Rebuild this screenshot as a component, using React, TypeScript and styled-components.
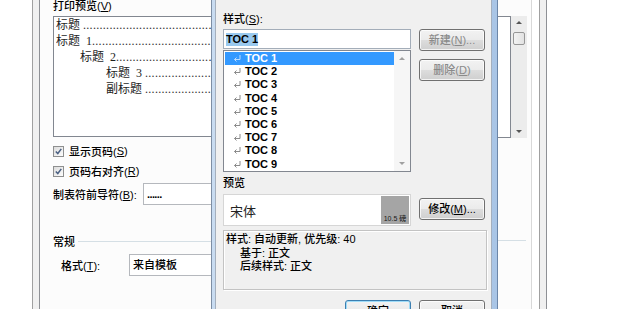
import React from 'react'
import styled, { createGlobalStyle } from 'styled-components'

const UI = `"Liberation Sans", "Noto Sans CJK SC", sans-serif`
const SERIF = `"Liberation Serif", "Noto Sans CJK SC", serif`

const GlobalStyle = createGlobalStyle`
  html, body {
    margin: 0;
    padding: 0;
    background: #fff;
    overflow: hidden;
  }
  body {
    font-family: ${UI};
    font-size: 11px;
    font-weight: 500;
    color: #000;
  }
  u {
    text-decoration-thickness: 1px;
    text-underline-offset: 1px;
  }
`

const Screen = styled.div`
  position: relative;
  width: 620px;
  height: 309px;
  overflow: hidden;
  display: flex;
  background: #fff;
`

const Outside = styled.div<{ $w?: number }>`
  flex: ${p => (p.$w ? `0 0 ${p.$w}px` : '1 1 auto')};
`

const Bevel = styled.div`
  flex: 0 0 8px;
  box-sizing: border-box;
  border-left: 1px solid #a0a0a0;
  border-right: 1px solid #8e9095;
  background: #f0f0f0;
`

const TabPage = styled.div`
  flex: 0 0 492px;
  box-sizing: border-box;
  border-right: 1px solid #d9d9d9;
  background: #fcfcfc;
  display: grid;
  grid-template-columns: 171px 287px 1fr;
`

/* ---------- background page, left part ---------- */

const LeftPane = styled.div`
  padding-left: 13px;
  display: flex;
  flex-direction: column;
  overflow: hidden;
`

const PaneLabel = styled.div`
  height: 12px;
  line-height: 12px;
  margin-bottom: 4px;
  white-space: nowrap;
`

const TocPreview = styled.div`
  flex: none;
  box-sizing: border-box;
  width: 200px;
  height: 121px;
  border: 1px solid #828790;
  background: #fff;
  padding: 0 0 0 2px;
  font-family: ${SERIF};
  font-size: 12px;
  font-weight: 400;
  color: #1e1e1e;
`

const TocLine = styled.div<{ $indent: number }>`
  display: flex;
  height: 16px;
  line-height: 16px;
  padding-left: ${p => p.$indent}px;
  white-space: pre;
  overflow: hidden;
`

const Leader = styled.span`
  flex: 1 1 auto;
  overflow: hidden;
  letter-spacing: 0.3px;
  color: #333;
`

const CheckRow = styled.div<{ $top?: number }>`
  display: flex;
  align-items: center;
  height: 20px;
  margin-top: ${p => p.$top ?? 0}px;
  white-space: nowrap;
`

const CheckBox = styled.span`
  box-sizing: border-box;
  width: 11px;
  height: 11px;
  margin-right: 5px;
  border: 1px solid #8e8f8f;
  background: linear-gradient(135deg, #dcdcdc, #fdfdfd);
  display: flex;
  align-items: center;
  justify-content: center;
`

const FieldRow = styled.div<{ $top?: number; $indent?: number }>`
  display: flex;
  align-items: center;
  margin-top: ${p => p.$top ?? 0}px;
  padding-left: ${p => p.$indent ?? 0}px;
  white-space: nowrap;
`

const RowLabel = styled.span<{ $w: number }>`
  flex: 0 0 ${p => p.$w}px;
`

const Field = styled.div<{ $bold?: boolean }>`
  flex: none;
  box-sizing: border-box;
  width: 120px;
  height: 22px;
  line-height: 20px;
  padding-left: 3px;
  border: 1px solid #b5b8bd;
  background: #fff;
  font-weight: ${p => (p.$bold ? 'bold' : 500)};
  letter-spacing: ${p => (p.$bold ? '-0.6px' : '0')};
`

const GroupHead = styled.div`
  display: flex;
  align-items: center;
  height: 16px;
  margin-top: 28px;
  white-space: nowrap;
`

const Rule = styled.span`
  flex: 0 0 140px;
  height: 1px;
  margin-left: 3px;
  background: #d5dfe5;
`

/* ---------- background page, right part ---------- */

const RightPane = styled.div`
  padding-top: 16px;
`

const RightList = styled.div`
  display: flex;
  width: 29px;
  height: 122px;
`

const ListPane = styled.div`
  flex: 1 1 auto;
  border-top: 1px solid #828790;
  border-right: 1px solid #828790;
  border-bottom: 1px solid #828790;
  background: #fff;
`

const ScrollTrack = styled.div`
  flex: 0 0 16px;
  display: flex;
  flex-direction: column;
  align-items: center;
  box-sizing: border-box;
  padding: 5px 0;
  background: #ececec;
`

const Thumb = styled.div`
  box-sizing: border-box;
  width: 12px;
  height: 13px;
  margin-top: 8px;
  border: 1px solid #979797;
  border-radius: 2px;
  background: linear-gradient(90deg, #f3f3f3, #e2e2e2);
`

const Tri = styled.span<{ $down?: boolean; $color?: string; $push?: boolean }>`
  width: 0;
  height: 0;
  flex: none;
  margin-top: ${p => (p.$push ? 'auto' : '0')};
  border-left: 3px solid transparent;
  border-right: 3px solid transparent;
  ${p =>
    p.$down
      ? `border-top: 3px solid ${p.$color ?? '#555'};`
      : `border-bottom: 3px solid ${p.$color ?? '#555'};`}
`

const SideRule = styled.div`
  width: 28px;
  height: 1px;
  margin-top: 102px;
  background: #d5dfe5;
`

/* ---------- foreground dialog ---------- */

const Dialog = styled.div`
  position: absolute;
  left: 211px;
  top: 0;
  width: 287px;
  height: 330px;
  box-sizing: border-box;
  display: flex;
  padding: 0 5px 0 3px;
  border-left: 1px solid #7d8ea4;
  border-right: 1px solid #6c86a8;
  background: linear-gradient(90deg, #c9dcf1, #b7cfea 50%, #a9c5e6);
`

const DialogBody = styled.div`
  flex: 1 1 auto;
  box-sizing: border-box;
  padding: 12px 6px 0 7px;
  border-left: 1px solid #a4afbd;
  border-right: 1px solid #a4afbd;
  background: #f0f0f0;
  display: flex;
  flex-direction: column;
`

const FieldLabel = styled.div<{ $top?: number }>`
  height: 14px;
  line-height: 14px;
  margin-top: ${p => p.$top ?? 0}px;
  white-space: nowrap;
`

const StyleRow = styled.div`
  display: flex;
  gap: 8px;
  margin-top: 3px;
`

const StyleCol = styled.div`
  flex: 0 0 188px;
  display: flex;
  flex-direction: column;
  gap: 1px;
`

const NameInput = styled.div`
  box-sizing: border-box;
  height: 20px;
  padding: 0 2px;
  border: 1px solid #a3adb9;
  background: #fff;
  display: flex;
  align-items: center;
`

const Selected = styled.span`
  height: 13px;
  line-height: 13px;
  background: #99c9ef;
  font-weight: bold;
`

const StyleList = styled.div`
  box-sizing: border-box;
  height: 122px;
  border: 1px solid #828790;
  background: #fff;
  display: flex;
`

const Items = styled.div`
  flex: 1 1 auto;
  padding: 1px 0 0 1px;
`

const StyleItem = styled.div<{ $active?: boolean }>`
  height: 13.2px;
  line-height: 13px;
  display: flex;
  align-items: center;
  padding-left: 8px;
  font-weight: bold;
  white-space: nowrap;
  overflow: hidden;
  background: ${p => (p.$active ? '#3399ff' : 'transparent')};
  color: ${p => (p.$active ? '#fff' : '#000')};
`

const ListScroll = styled.div`
  flex: 0 0 16px;
  box-sizing: border-box;
  padding: 6px 0;
  display: flex;
  flex-direction: column;
  align-items: center;
  justify-content: space-between;
  background: #f6f6f6;
`

const ButtonCol = styled.div`
  display: flex;
  flex-direction: column;
  gap: 8px;
`

const Button = styled.button<{ $top?: number; $default?: boolean }>`
  flex: none;
  box-sizing: border-box;
  width: 66px;
  height: 22px;
  margin: ${p => p.$top ?? 0}px 0 0 0;
  padding: 0;
  font-family: ${UI};
  font-size: 11px;
  font-weight: 500;
  line-height: 20px;
  color: #000;
  border: 1px solid ${p => (p.$default ? '#3c7fb1' : '#707070')};
  border-radius: 3px;
  background: linear-gradient(#f2f2f2 0%, #ebebeb 50%, #dddddd 50%, #cfcfcf 100%);
  box-shadow: inset 0 0 0 1px ${p => (p.$default ? '#9fdcf8' : 'rgba(255, 255, 255, 0.75)')};
  white-space: nowrap;

  &:disabled {
    color: #8a8a8a;
  }
`

const PreviewRow = styled.div`
  display: flex;
  align-items: flex-start;
  gap: 8px;
  margin-top: 4px;
`

const Sample = styled.div`
  flex: 0 0 188px;
  box-sizing: border-box;
  height: 32px;
  padding: 1px;
  border: 1px solid #d6d6d6;
  background: #fff;
  display: flex;
`

const SampleText = styled.div`
  flex: 1 1 auto;
  padding-left: 5px;
  display: flex;
  align-items: center;
  font-size: 13px;
  font-weight: 400;
  color: #222;
`

const SizeTag = styled.div`
  flex: 0 0 28px;
  background: #a5a5a5;
  display: flex;
  align-items: flex-end;
  justify-content: center;
  padding-bottom: 1px;
  font-size: 7px;
  line-height: 9px;
  color: #1a1a1a;
  white-space: nowrap;
`

const Description = styled.div`
  box-sizing: border-box;
  height: 60px;
  margin: 4px -2px 0 0;
  padding: 2px 2px 0 2px;
  border: 1px solid #c3c3c3;
  box-shadow: inset 1px 1px 0 #fff, 1px 1px 0 #fff;
`

const DescLine = styled.div<{ $indent?: boolean }>`
  height: 13.5px;
  line-height: 13.5px;
  padding-left: ${p => (p.$indent ? 14 : 0)}px;
  white-space: nowrap;
`

const Footer = styled.div`
  display: flex;
  justify-content: flex-end;
  gap: 8px;
  margin-top: 10px;
`

const Check = () => (
  <svg width="7" height="7" viewBox="0 0 7 7">
    <path d="M0.8 3.4 L2.8 5.5 L6.3 0.9" fill="none" stroke="#4b6183" strokeWidth="1.5" />
  </svg>
)

const ParaMark = ({ color }: { color: string }) => (
  <svg width="8" height="7" viewBox="0 0 8 7" style={{ marginRight: 4, flex: 'none' }}>
    <path d="M7 0 V4.5 H1.5 M3.5 2.5 L1.5 4.5 L3.5 6.5" fill="none" stroke={color} strokeWidth="1" />
  </svg>
)

const DOTS = '.'.repeat(60)

const tocLines = [
  { indent: 0, text: '标题 ' },
  { indent: 0, text: '标题  1' },
  { indent: 24, text: '标题  2' },
  { indent: 50, text: '标题  3 ' },
  { indent: 50, text: '副标题 ' },
]

const styles = [1, 2, 3, 4, 5, 6, 7, 8, 9]

const App = () => (
  <>
    <GlobalStyle />
    <Screen>
      <Outside $w={32} />
      <Bevel />
      <TabPage>
        <LeftPane>
          <PaneLabel>
            打印预览(<u>V</u>)
          </PaneLabel>
          <TocPreview>
            {tocLines.map((l, i) => (
              <TocLine key={i} $indent={l.indent}>
                {l.text}
                <Leader>{DOTS}</Leader>
              </TocLine>
            ))}
          </TocPreview>
          <CheckRow $top={4}>
            <CheckBox>
              <Check />
            </CheckBox>
            显示页码(<u>S</u>)
          </CheckRow>
          <CheckRow>
            <CheckBox>
              <Check />
            </CheckBox>
            页码右对齐(<u>R</u>)
          </CheckRow>
          <FieldRow $top={2}>
            <RowLabel $w={90}>
              制表符前导符(<u>B</u>):
            </RowLabel>
            <Field $bold>......</Field>
          </FieldRow>
          <GroupHead>
            常规
            <Rule />
          </GroupHead>
          <FieldRow $top={5} $indent={8}>
            <RowLabel $w={68}>
              格式(<u>T</u>):
            </RowLabel>
            <Field>来自模板</Field>
          </FieldRow>
        </LeftPane>
        <div />
        <RightPane>
          <RightList>
            <ListPane />
            <ScrollTrack>
              <Tri />
              <Thumb />
              <Tri $down $push />
            </ScrollTrack>
          </RightList>
          <SideRule />
        </RightPane>
      </TabPage>
      <Outside $w={7} />
      <Bevel />
      <Outside />

      <Dialog>
        <DialogBody>
          <FieldLabel>
            样式(<u>S</u>):
          </FieldLabel>
          <StyleRow>
            <StyleCol>
              <NameInput>
                <Selected>TOC 1</Selected>
              </NameInput>
              <StyleList>
                <Items>
                  {styles.map(n => (
                    <StyleItem key={n} $active={n === 1}>
                      <ParaMark color={n === 1 ? '#bcdcff' : '#8a8a8a'} />
                      {`TOC ${n}`}
                    </StyleItem>
                  ))}
                </Items>
                <ListScroll>
                  <Tri $color="#a0a0a0" />
                  <Tri $down $color="#a0a0a0" />
                </ListScroll>
              </StyleList>
            </StyleCol>
            <ButtonCol>
              <Button disabled>
                新建(<u>N</u>)...
              </Button>
              <Button disabled>
                删除(<u>D</u>)
              </Button>
            </ButtonCol>
          </StyleRow>
          <FieldLabel $top={4}>预览</FieldLabel>
          <PreviewRow>
            <Sample>
              <SampleText>宋体</SampleText>
              <SizeTag>10.5 磅</SizeTag>
            </Sample>
            <Button $top={4}>
              修改(<u>M</u>)...
            </Button>
          </PreviewRow>
          <Description>
            <DescLine>样式: 自动更新, 优先级: 40</DescLine>
            <DescLine $indent>基于: 正文</DescLine>
            <DescLine $indent>后续样式: 正文</DescLine>
          </Description>
          <Footer>
            <Button $default>确定</Button>
            <Button>取消</Button>
          </Footer>
        </DialogBody>
      </Dialog>
    </Screen>
  </>
)

export default App
